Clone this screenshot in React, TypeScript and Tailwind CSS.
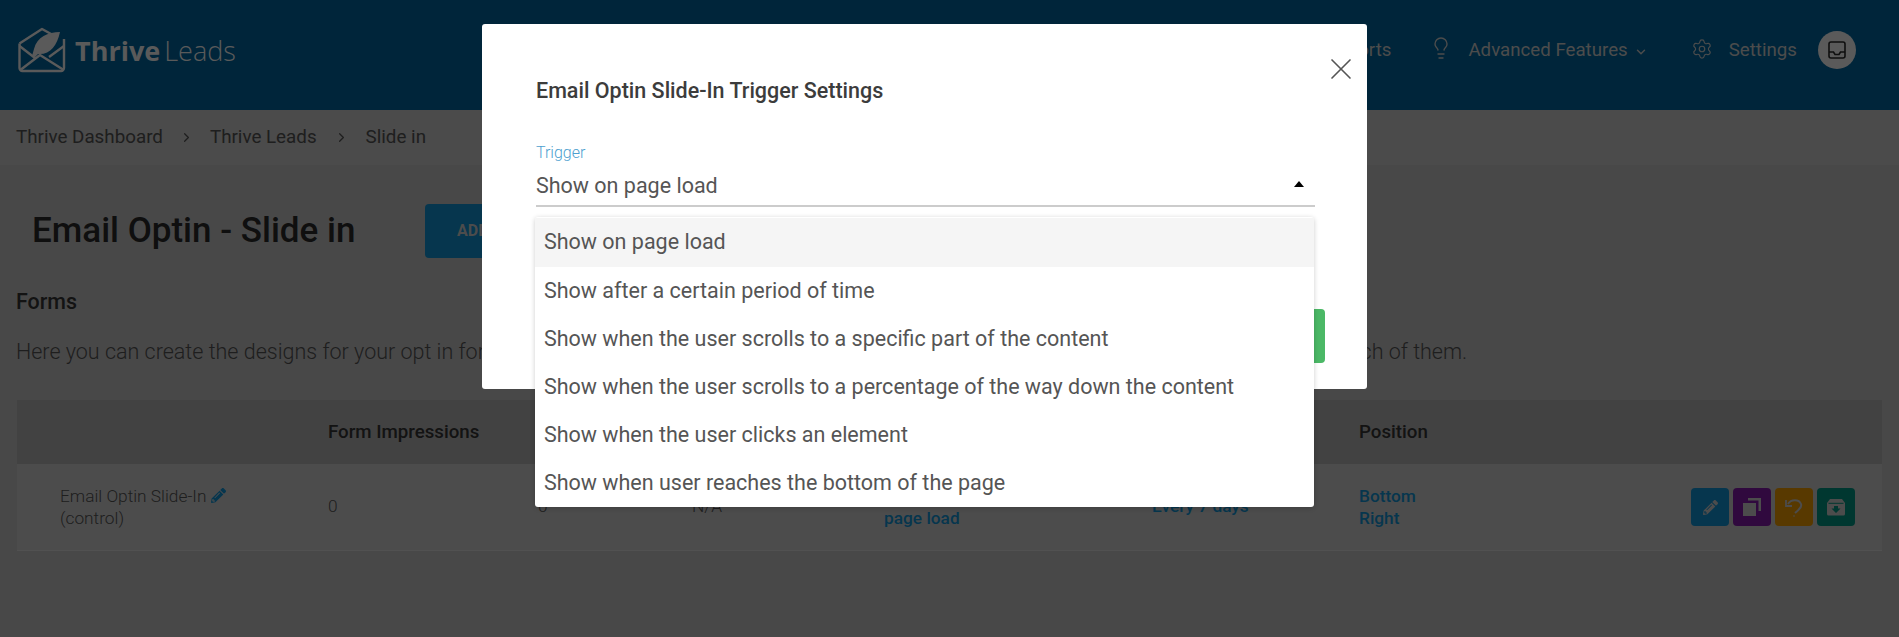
import { ChevronDown, ChevronRight, Lightbulb, Settings, X } from 'lucide-react';
import { FaPencilAlt } from 'react-icons/fa';

const triggers = [
  'Show on page load',
  'Show after a certain period of time',
  'Show when the user scrolls to a specific part of the content',
  'Show when the user scrolls to a percentage of the way down the content',
  'Show when the user clicks an element',
  'Show when user reaches the bottom of the page',
];

function Logo() {
  return (
    <svg width="48" height="46" viewBox="0 0 48 46" fill="none" stroke="currentColor" strokeWidth="2.4" strokeLinejoin="round">
      <path d="M1.5 16.5 V41 a3 3 0 0 0 3 3 H43 a3 3 0 0 0 3-3 V12" />
      <path d="M1.5 16.5 L24 2 L34 7.5" />
      <path d="M1.5 19 L17 31 M46 19 L31 30 M3 42.5 L22 28 L45 42.5" />
      <path fill="currentColor" stroke="none" d="M42 5 C30 5 19 10 16 22 L14 29 L17 30 L20 27 C32 28 39 19 42 5 Z" />
    </svg>
  );
}

function CopyIcon() {
  return (
    <svg width="22" height="22" viewBox="0 0 22 22" fill="currentColor">
      <rect x="2" y="7" width="13" height="13" />
      <path d="M7 2 H20 V15 H17.5 V4.5 H7 Z" />
    </svg>
  );
}

function UndoIcon() {
  return (
    <svg width="20" height="22" viewBox="0 0 20 22" fill="none" stroke="currentColor" strokeWidth="2">
      <path d="M4 8 C7 3 15 3 17 8 C18.5 12 14 14 11 17" />
      <path d="M2 4 V10 H8" strokeWidth="1.8" />
      <circle cx="10" cy="20" r="0.8" fill="currentColor" stroke="none" />
    </svg>
  );
}

function ArchiveIcon() {
  return (
    <svg width="20" height="20" viewBox="0 0 20 20">
      <path fill="currentColor" d="M4 2 H16 L19 6 V17 a1.5 1.5 0 0 1-1.5 1.5 H2.5 A1.5 1.5 0 0 1 1 17 V6 Z" />
      <path fill="#007a6a" d="M2.5 5.8 H17.5 V6.8 H2.5 Z" />
      <path fill="#007a6a" d="M8 9 H12 V11.5 H14.5 L10 16 L5.5 11.5 H8 Z" />
    </svg>
  );
}

function Page() {
  return (
    <div className="flex h-[637px] flex-col bg-[#a0a0a0] text-[#444]">
      <header className="flex h-[110px] shrink-0 items-center bg-[#005380] pb-[10px] pl-[18px] pr-[43px] text-[#a8a8a8]">
        <span className="text-[#c8c8c8]">
          <Logo />
        </span>
        <div className="ml-[9px] flex items-baseline font-['Open_Sans',sans-serif] text-[27px] leading-none text-[#c8c8c8]">
          <span className="font-bold">Thrive</span>
          <span className="ml-[4px] font-light">Leads</span>
        </div>
        <nav className="ml-auto flex items-center text-[18.7px]">
          <span>Reports</span>
          <Lightbulb className="ml-[38px] h-[24px] w-[24px] -translate-y-[2px]" strokeWidth={1.4} />
          <span className="ml-[15px]">Advanced Features</span>
          <ChevronDown className="ml-[6px] mt-[3px] h-[14px] w-[14px]" strokeWidth={2.5} />
          <Settings className="ml-[43px] h-[22px] w-[22px] -translate-y-[1px]" strokeWidth={1.3} />
          <span className="ml-[16px]">Settings</span>
          <span className="ml-[21px] flex h-[38px] w-[38px] items-center justify-center rounded-full bg-[#c8c8c8] text-[#222]">
            <svg width="20" height="20" viewBox="0 0 20 20" fill="none" stroke="currentColor" strokeWidth="1.6">
              <rect x="2" y="2" width="16" height="16" rx="2" />
              <path d="M2 12 H6.5 L8 14.5 H12 L13.5 12 H18" />
            </svg>
          </span>
        </nav>
      </header>

      <div className="flex h-[55px] shrink-0 items-center bg-[#a6a6a6] pl-[16px] text-[18.8px] text-[#444]">
        <span>Thrive Dashboard</span>
        <ChevronRight className="mx-[16px] h-[15px] w-[15px]" strokeWidth={2} />
        <span>Thrive Leads</span>
        <ChevronRight className="mx-[17px] h-[15px] w-[15px]" strokeWidth={2} />
        <span>Slide in</span>
      </div>

      <div className="flex items-center pl-[32px] pt-[39px]">
        <h1 className="w-[393px] text-[35px] font-medium leading-[54px] text-[#222]">Email Optin - Slide in</h1>
        <button className="flex h-[54px] w-[200px] items-center rounded bg-[#0e78ad] pl-[32px] text-[16px] font-bold text-[#a8a8a8]">
          ADD NEW
        </button>
      </div>

      <h2 className="ml-[16px] mt-[32px] text-[21.4px] font-medium leading-[24px] text-[#2a2a2a]">Forms</h2>
      <p className="ml-[16px] mt-[24px] whitespace-nowrap text-[21.5px] font-light leading-[28px] text-[#444]">
        Here you can create the designs for your opt in forms. You can create as many forms as you like and A/B test them for the conversion rate of each of them.
      </p>

      <div className="ml-[17px] mr-[17px] mt-[34px] text-[17.3px]">
        <div className="grid h-[64px] grid-cols-[311px_364px_192px_268px_207px_1fr] items-center bg-[#939393] text-[18.7px] font-medium text-[#2a2a2a]">
          <span />
          <span>Form Impressions</span>
          <span>N/A</span>
          <span>Trigger</span>
          <span>Frequency</span>
          <span>Position</span>
        </div>
        <div className="grid h-[87px] grid-cols-[311px_210px_154px_192px_268px_207px_1fr] items-center border-b border-[#b4b4b4] bg-[#a9a9a9] pr-[27px]">
          <div className="pl-[43px] font-light leading-[22px] text-[#444]">
            Email Optin Slide-In <FaPencilAlt className="mb-[3px] inline h-[15px] w-[15px] text-[#0e78ad]" />
            <br />
            (control)
          </div>
          <span className="font-light">0</span>
          <span className="font-light">0</span>
          <span className="font-light">N/A</span>
          <span className="font-medium leading-[22px] text-[#0e78ad]">
            Show on
            <br />
            page load
          </span>
          <span className="font-medium text-[#0e78ad]">Every 7 days</span>
          <div className="flex items-center justify-between">
            <span className="font-medium leading-[22px] text-[#0e78ad]">
              Bottom
              <br />
              Right
            </span>
            <div className="flex gap-[4px] text-[#a8a8a8]">
              <button className="flex h-[38px] w-[38px] items-center justify-center rounded bg-[#0e78ad]">
                <FaPencilAlt className="h-[15px] w-[15px]" />
              </button>
              <button className="flex h-[38px] w-[38px] items-center justify-center rounded bg-[#6c1689]">
                <CopyIcon />
              </button>
              <button className="flex h-[38px] w-[38px] items-center justify-center rounded bg-[#c47e00]">
                <UndoIcon />
              </button>
              <button className="flex h-[38px] w-[38px] items-center justify-center rounded bg-[#007a6a]">
                <ArchiveIcon />
              </button>
            </div>
          </div>
        </div>
      </div>
    </div>
  );
}

function TriggerModal() {
  return (
    <div className="absolute left-[482px] top-[24px] h-[365px] w-[885px] rounded-[3px] bg-white pl-[54px] pr-[52px] pt-[55px]">
      <button className="absolute right-[8px] top-[27px] text-[#555]">
        <X className="h-[36px] w-[36px]" strokeWidth={1.1} />
      </button>
      <h3 className="text-[21.5px] font-medium leading-[24px] text-[#3c3c3c]">Email Optin Slide-In Trigger Settings</h3>

      <label className="mt-[40px] block text-[16px] font-light leading-[20px] text-[#4d9fcf]">Trigger</label>
      <div className="flex h-[44px] items-center justify-between border-b-2 border-[#ccc] pr-[11px] pt-[4px] text-[21.5px] text-[#555]">
        <span>Show on page load</span>
        <span className="-translate-y-[2px] h-0 w-0 border-x-[5.5px] border-b-[6px] border-x-transparent border-b-black" />
      </div>

      <div className="absolute bottom-[26px] right-[42px] h-[54px] w-[150px] rounded bg-[#4bb866]" />

      <ul className="absolute left-[53px] top-[193px] z-10 w-[779px] overflow-hidden rounded-[3px] bg-white pt-[1px] text-[21.5px] text-[#555] shadow-[0_1px_5px_rgba(0,0,0,0.2)]">
        {triggers.map((t, i) => (
          <li key={t} className={i === 0 ? 'flex h-[49px] items-center bg-[#f5f5f5] pl-[9px]' : 'flex h-[48px] items-center pl-[9px]'}>
            {t}
          </li>
        ))}
      </ul>
    </div>
  );
}

export default function App() {
  return (
    <div className="relative h-[637px] overflow-hidden font-['Roboto',sans-serif]">
      <Page />
      <div className="absolute inset-0 bg-black/[0.55]" />
      <TriggerModal />
    </div>
  );
}
